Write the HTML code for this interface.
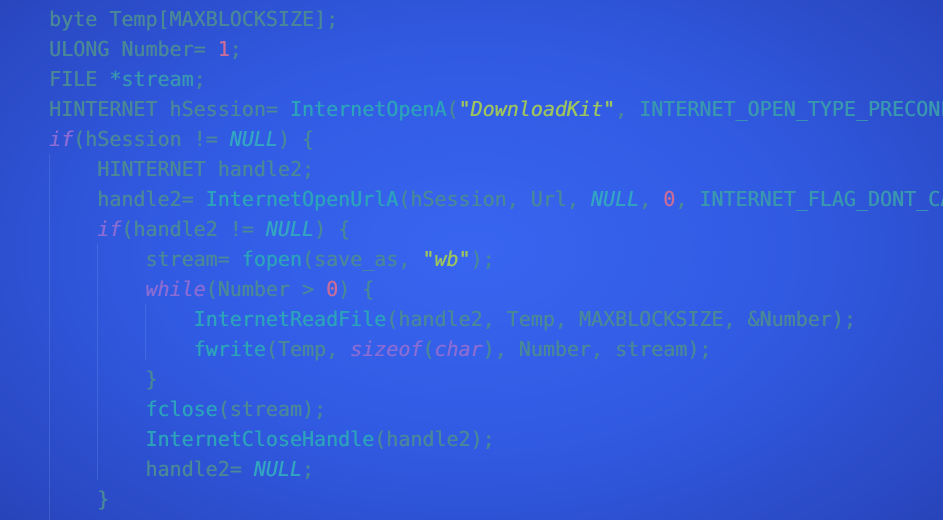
<!DOCTYPE html>
<html><head><meta charset="utf-8"><style>
html,body{margin:0;padding:0;width:943px;height:520px;overflow:hidden}
body{background:radial-gradient(ellipse 75% 85% at 50% 48%,#3865f0 0%,#315ae2 45%,#2a49c4 80%,#253fae 100%);position:relative}
pre{margin:0;position:absolute;left:49px;top:4px;font-family:"DejaVu Sans Mono","Liberation Mono",monospace;font-size:20px;line-height:30px;color:#4a8898;white-space:pre;text-shadow:0.4px 0 0 currentColor}
.f{color:#2ca2bb}.k{color:#8a6cd4;font-style:italic}.n{color:#c86c9a}.s{color:#9ec45e;font-style:italic}.c{color:#33a4c2;font-style:italic}.t{color:#3a97b0}
.g{position:absolute;width:1px;background:rgba(110,150,225,0.3)}
</style></head><body>
<div class="g" style="left:49px;top:154px;height:366px"></div>
<div class="g" style="left:97px;top:244px;height:236px"></div>
<div class="g" style="left:145px;top:304px;height:56px"></div>
<pre>byte Temp[MAXBLOCKSIZE];
ULONG Number= <span class="n">1</span>;
FILE <span class="t">*stream</span>;
HINTERNET hSession= <span class="f">InternetOpenA</span>(<span class="s">"DownloadKit"</span>, <span class="t">INTERNET_OPEN_TYPE_PRECONFIG</span>
<span class="k">if</span>(hSession != <span class="c">NULL</span>) {
    HINTERNET handle2;
    handle2= <span class="f">InternetOpenUrlA</span>(hSession, Url, <span class="c">NULL</span>, <span class="n">0</span>, <span class="t">INTERNET_FLAG_DONT_CACHE</span>
    <span class="k">if</span>(handle2 != <span class="c">NULL</span>) {
        stream= <span class="f">fopen</span>(save_as, <span class="s">"wb"</span>);
        <span class="k">while</span>(Number &gt; <span class="n">0</span>) {
            <span class="f">InternetReadFile</span>(handle2, Temp, MAXBLOCKSIZE, &amp;Number);
            <span class="f">fwrite</span>(Temp, <span class="k">sizeof</span>(<span class="k">char</span>), Number, stream);
        }
        <span class="f">fclose</span>(stream);
        <span class="f">InternetCloseHandle</span>(handle2);
        handle2= <span class="c">NULL</span>;
    }
</pre>
</body></html>
